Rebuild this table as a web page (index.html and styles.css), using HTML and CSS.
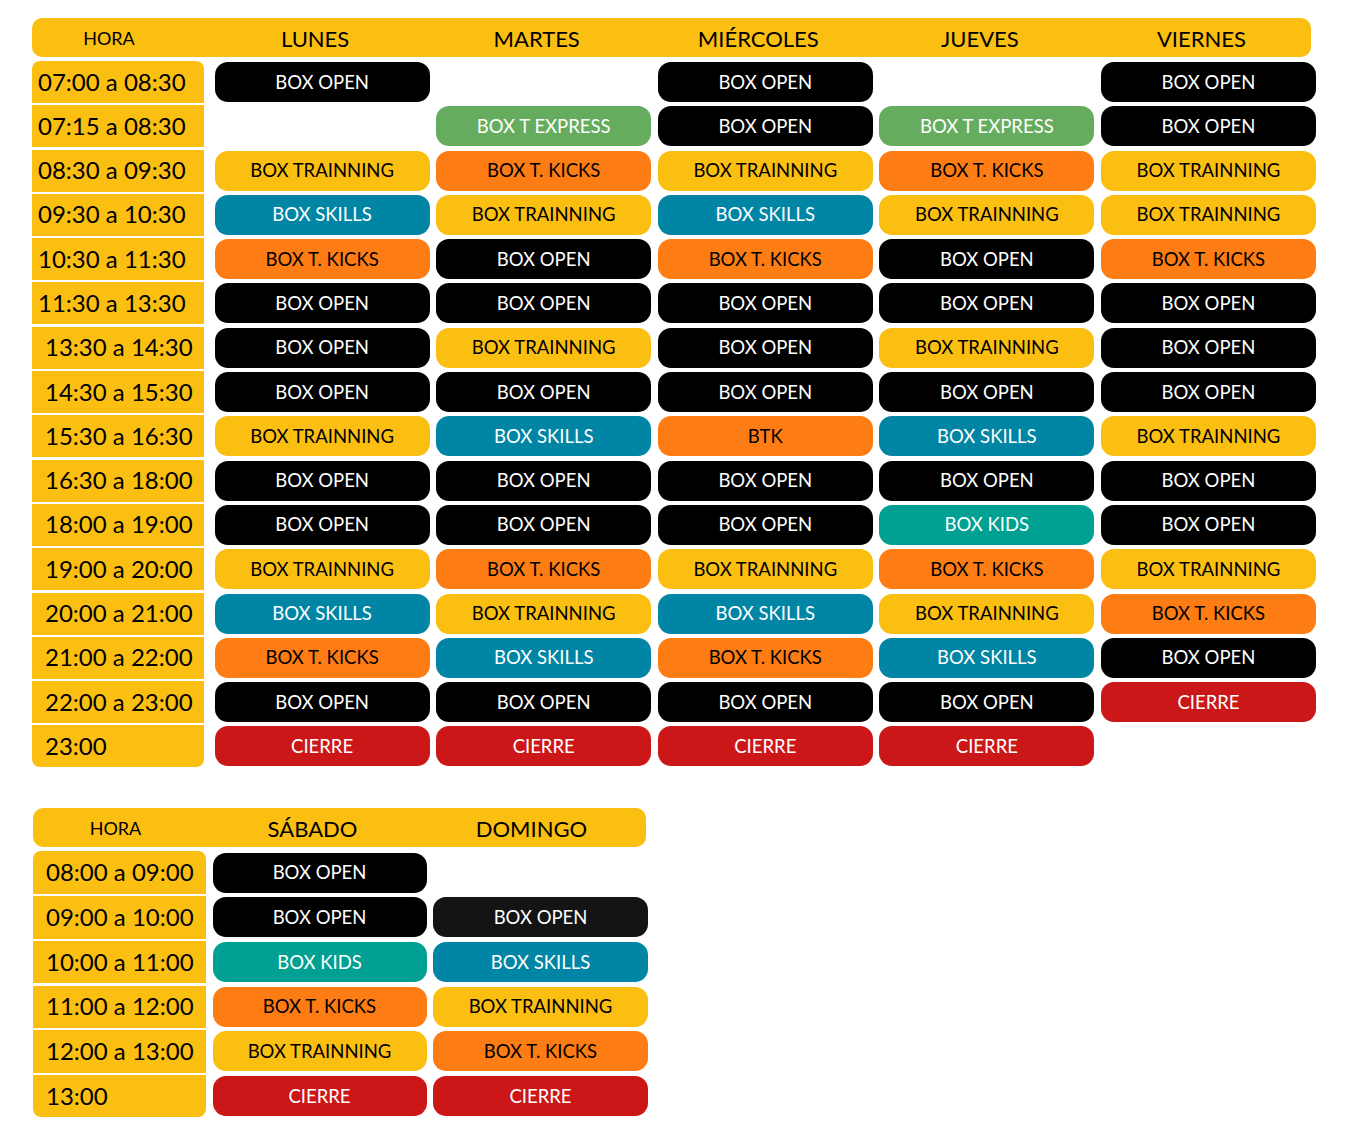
FILE: index.html
```html
<!DOCTYPE html>
<html lang="es">
<head>
<meta charset="utf-8">
<title>Horario</title>
<link rel="stylesheet" href="styles.css">
</head>
<body>
<section class="sched week">
  <div class="head">
    <div class="hh">HORA</div><div class="dh">LUNES</div><div class="dh">MARTES</div><div class="dh">MIÉRCOLES</div><div class="dh">JUEVES</div><div class="dh">VIERNES</div>
  </div>
  <div class="body">
    <div class="hr first">07:00 a 08:30</div>
    <div class="p k">BOX OPEN</div><div class="e"></div><div class="p k">BOX OPEN</div><div class="e"></div><div class="p k">BOX OPEN</div>

    <div class="hr">07:15 a 08:30</div>
    <div class="e"></div><div class="p g">BOX T EXPRESS</div><div class="p k">BOX OPEN</div><div class="p g">BOX T EXPRESS</div><div class="p k">BOX OPEN</div>

    <div class="hr">08:30 a 09:30</div>
    <div class="p y">BOX TRAINNING</div><div class="p o">BOX T. KICKS</div><div class="p y">BOX TRAINNING</div><div class="p o">BOX T. KICKS</div><div class="p y">BOX TRAINNING</div>

    <div class="hr">09:30 a 10:30</div>
    <div class="p b">BOX SKILLS</div><div class="p y">BOX TRAINNING</div><div class="p b">BOX SKILLS</div><div class="p y">BOX TRAINNING</div><div class="p y">BOX TRAINNING</div>

    <div class="hr">10:30 a 11:30</div>
    <div class="p o">BOX T. KICKS</div><div class="p k">BOX OPEN</div><div class="p o">BOX T. KICKS</div><div class="p k">BOX OPEN</div><div class="p o">BOX T. KICKS</div>

    <div class="hr">11:30 a 13:30</div>
    <div class="p k">BOX OPEN</div><div class="p k">BOX OPEN</div><div class="p k">BOX OPEN</div><div class="p k">BOX OPEN</div><div class="p k">BOX OPEN</div>

    <div class="hr in">13:30 a 14:30</div>
    <div class="p k">BOX OPEN</div><div class="p y">BOX TRAINNING</div><div class="p k">BOX OPEN</div><div class="p y">BOX TRAINNING</div><div class="p k">BOX OPEN</div>

    <div class="hr in">14:30 a 15:30</div>
    <div class="p k">BOX OPEN</div><div class="p k">BOX OPEN</div><div class="p k">BOX OPEN</div><div class="p k">BOX OPEN</div><div class="p k">BOX OPEN</div>

    <div class="hr in">15:30 a 16:30</div>
    <div class="p y">BOX TRAINNING</div><div class="p b">BOX SKILLS</div><div class="p o">BTK</div><div class="p b">BOX SKILLS</div><div class="p y">BOX TRAINNING</div>

    <div class="hr in">16:30 a 18:00</div>
    <div class="p k">BOX OPEN</div><div class="p k">BOX OPEN</div><div class="p k">BOX OPEN</div><div class="p k">BOX OPEN</div><div class="p k">BOX OPEN</div>

    <div class="hr in">18:00 a 19:00</div>
    <div class="p k">BOX OPEN</div><div class="p k">BOX OPEN</div><div class="p k">BOX OPEN</div><div class="p t">BOX KIDS</div><div class="p k">BOX OPEN</div>

    <div class="hr in">19:00 a 20:00</div>
    <div class="p y">BOX TRAINNING</div><div class="p o">BOX T. KICKS</div><div class="p y">BOX TRAINNING</div><div class="p o">BOX T. KICKS</div><div class="p y">BOX TRAINNING</div>

    <div class="hr in">20:00 a 21:00</div>
    <div class="p b">BOX SKILLS</div><div class="p y">BOX TRAINNING</div><div class="p b">BOX SKILLS</div><div class="p y">BOX TRAINNING</div><div class="p o">BOX T. KICKS</div>

    <div class="hr in">21:00 a 22:00</div>
    <div class="p o">BOX T. KICKS</div><div class="p b">BOX SKILLS</div><div class="p o">BOX T. KICKS</div><div class="p b">BOX SKILLS</div><div class="p k">BOX OPEN</div>

    <div class="hr in">22:00 a 23:00</div>
    <div class="p k">BOX OPEN</div><div class="p k">BOX OPEN</div><div class="p k">BOX OPEN</div><div class="p k">BOX OPEN</div><div class="p r">CIERRE</div>

    <div class="hr in last">23:00</div>
    <div class="p r">CIERRE</div><div class="p r">CIERRE</div><div class="p r">CIERRE</div><div class="p r">CIERRE</div><div class="e"></div>
  </div>
</section>

<section class="sched weekend">
  <div class="head">
    <div class="hh">HORA</div><div class="dh">SÁBADO</div><div class="dh">DOMINGO</div>
  </div>
  <div class="body">
    <div class="hr in first">08:00 a 09:00</div>
    <div class="p k">BOX OPEN</div><div class="e"></div>

    <div class="hr in">09:00 a 10:00</div>
    <div class="p k">BOX OPEN</div><div class="p k2">BOX OPEN</div>

    <div class="hr in">10:00 a 11:00</div>
    <div class="p t">BOX KIDS</div><div class="p b">BOX SKILLS</div>

    <div class="hr in">11:00 a 12:00</div>
    <div class="p o">BOX T. KICKS</div><div class="p y">BOX TRAINNING</div>

    <div class="hr in">12:00 a 13:00</div>
    <div class="p y">BOX TRAINNING</div><div class="p o">BOX T. KICKS</div>

    <div class="hr in last">13:00</div>
    <div class="p r">CIERRE</div><div class="p r">CIERRE</div>
  </div>
</section>
</body>
</html>
```

FILE: styles.css
```css
* { box-sizing: border-box; }

body {
  margin: 0;
  padding: 18px 0 0 32px;
  background: #fff;
  font-family: "Lato", "Liberation Sans", sans-serif;
  color: #000;
}

.sched .head {
  display: grid;
  align-items: center;
  height: 39px;
  background: #fbbf12;
  border-radius: 10px;
  font-size: 22px;
  padding-top: 1px;
}

.sched .hh {
  font-size: 18px;
  text-align: center;
  padding-right: 22px;
}

.sched .dh {
  text-align: center;
  padding-right: 14px;
}

.sched .body {
  display: grid;
  margin-top: 4px;
}

.week .head,
.week .body {
  grid-template-columns: 176px repeat(5, 215px);
  column-gap: 6.6px;
}

.week .head { width: 1279px; }

.week .body {
  grid-auto-rows: 42px;
  row-gap: 2.3px;
}

.weekend {
  margin-top: 41px;
  margin-left: 1px;
}

.weekend .head,
.weekend .body {
  grid-template-columns: 173px 214px 215px;
  column-gap: 6.5px;
}

.weekend .head { width: 613px; }
.weekend .hh { padding-right: 8px; }
.weekend .dh:last-child { padding-right: 18px; }
.weekend .hr { width: 173px; }

.weekend .body {
  grid-auto-rows: 42.5px;
  row-gap: 2.2px;
}

.hr {
  width: 172px;
  background: #fbbf12;
  font-size: 24px;
  display: flex;
  align-items: center;
  padding-left: 6px;
  padding-bottom: 2px;
}

.hr.in { padding-left: 13px; }
.hr.first { border-radius: 8px 8px 0 0; }
.hr.last { border-radius: 0 0 8px 8px; }

.p {
  height: 40px;
  align-self: center;
  border-radius: 13px;
  display: flex;
  align-items: center;
  justify-content: center;
  font-size: 18.5px;
  padding-bottom: 1px;
  white-space: nowrap;
}

.k { background: #000; color: #fff; }
.k2 { background: #141414; color: #fff; }
.y { background: #fbbf12; color: #000; }
.o { background: #fd7c13; color: #000; }
.b { background: #0085a4; color: #fff; }
.g { background: #66ac5e; color: #fff; }
.t { background: #00a192; color: #fff; }
.r { background: #cc1719; color: #fff; }
```
